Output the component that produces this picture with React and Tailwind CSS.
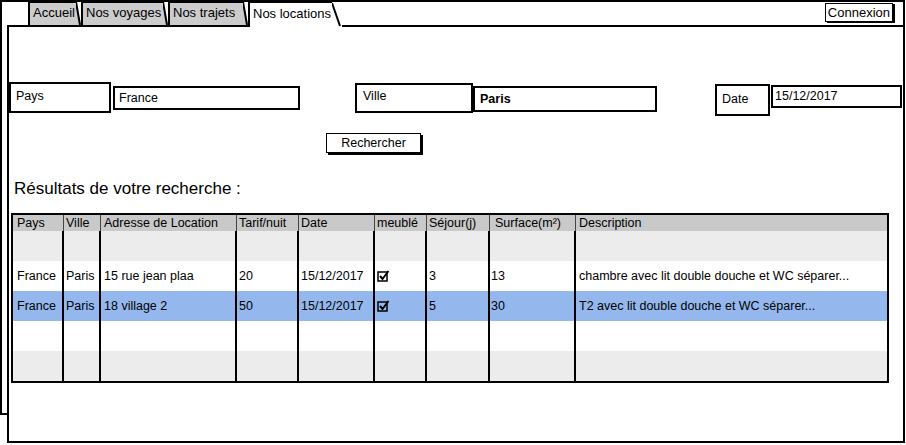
import React from 'react'

const cols = [
    { label: 'Pays', pl: 'pl-[4px]' },
    { label: 'Ville', pl: 'pl-[2px]' },
    { label: 'Adresse de Location', pl: 'pl-[3px]' },
    { label: 'Tarif/nuit', pl: 'pl-[2px]' },
    { label: 'Date', pl: 'pl-[2px]' },
    { label: 'meublé', pl: 'pl-[2px]' },
    { label: 'Séjour(j)', pl: 'pl-[2px]' },
    { label: 'Surface(m²)', pl: 'pl-[5px]' },
    { label: 'Description', pl: 'pl-[3px]' },
]

const rows = [
    { bg: 'bg-[#ececec]', cells: [] },
    { bg: 'bg-white', cells: ['France', 'Paris', '15 rue jean plaa', '20', '15/12/2017', 'check', '3', '13', 'chambre avec lit double douche et WC séparer...'] },
    { bg: 'bg-[#94b8ee]', cells: ['France', 'Paris', '18 village 2', '50', '15/12/2017', 'check', '5', '30', 'T2 avec lit double douche et WC séparer...'] },
    { bg: 'bg-white', cells: [] },
    { bg: 'bg-[#ececec]', cells: [] },
]

function Check() {
    return (
        <svg width="13" height="12" viewBox="0 0 13 12">
            <rect x="1" y="2" width="9" height="9" fill="none" stroke="#000" strokeWidth="1.5" />
            <path d="M3 6 L5.5 9 L11.5 1" fill="none" stroke="#000" strokeWidth="2" />
        </svg>
    )
}

function Tab({ label, active, slant = 4, w }) {
    if (active) {
        return (
            <div className="flex h-[25px]">
                <div className={`${w} bg-white border-l-2 border-t border-black pl-[3px] pt-[3px] text-[13px] leading-[16px] whitespace-nowrap`}>{label}</div>
                <svg width={slant + 2} height="25" className="block">
                    <polygon points={`0,0 1,0 ${slant + 1},25 0,25`} fill="#fff" />
                    <line x1="0" y1="1" x2={slant} y2="24" stroke="#000" strokeWidth="2" />
                </svg>
            </div>
        )
    }
    return (
        <div className="flex h-[25px] border-b-2 border-black">
            <div className={`${w} bg-[#cccccc] border-l-2 border-t border-black pl-[3px] pt-[2px] text-[13px] leading-[16px] whitespace-nowrap`}>{label}</div>
            <svg width={slant + 1} height="23" className="block">
                <polygon points={`0,0 1,0 ${slant + 1},23 0,23`} fill="#cccccc" />
                <line x1="0" y1="0" x2={slant} y2="23" stroke="#000" strokeWidth="2" />
            </svg>
        </div>
    )
}

export default function App() {
    const grid = 'grid grid-cols-[51px_37px_136px_62px_76px_52px_63px_86px_1fr]'
    return (
        <div className="w-[906px] h-[445px] bg-white text-black font-['Liberation_Sans',Arial,sans-serif] overflow-hidden">
            {/* fenetre */}
            <div className="w-[905px] h-[415px] border-2 border-black">
                {/* onglets */}
                <div className="flex ml-[5px] w-[898px] h-[25px]">
                    <div className="w-[21px] border-b-2 border-black" />
                    <Tab label="Accueil" w="w-[48px]" />
                    <Tab label="Nos voyages" w="w-[82px]" />
                    <Tab label="Nos trajets" w="w-[75px]" />
                    <Tab label="Nos locations" active slant={8} w="w-[84px]" />
                    <div className="flex-1 border-b-2 border-black flex justify-end items-start pt-[1px] pr-[12px]">
                        <div className="h-[19px] px-[2px] border border-black shadow-[2px_1px_0_#000] text-[13px] leading-[17px] bg-white">Connexion</div>
                    </div>
                </div>

                {/* panneau */}
                <div className="flex flex-col items-start ml-[5px] w-[898px] h-[416px] border-l-2 border-r-2 border-b-2 border-black bg-white">
                    <div className="flex items-start h-[34px] mt-[55px] text-[12.5px]">
                        <div className="w-[102px] h-[31px] border-2 border-black pl-[5px] pt-[5px] leading-[14px]">Pays</div>
                        <div className="ml-[2px] mt-[4px] w-[187px] h-[24px] border-2 border-black pl-[4px] flex items-center">France</div>
                        <div className="ml-[55px] mt-[1px] w-[118px] h-[30px] border-2 border-black pl-[6px] pt-[4px] leading-[14px]">Ville</div>
                        <div className="mt-[4px] w-[184px] h-[26px] border-2 border-black pl-[5px] flex items-center font-bold">Paris</div>
                        <div className="ml-[58px] mt-[2px] w-[55px] h-[32px] border-2 border-black pl-[5px] pt-[6px] leading-[14px]">Date</div>
                        <div className="ml-[1px] mt-[3px] w-[131px] h-[23px] border-2 border-black pl-[2px] flex items-center">15/12/2017</div>
                    </div>

                    <div className="ml-[317px] mt-[17px] w-[95px] h-[20px] border border-black shadow-[2px_2px_0_#000] flex items-center justify-center text-[12.5px]">Rechercher</div>

                    <div className="ml-[5px] mt-[26px] h-[20px] text-[17px] leading-[20px]">Résultats de votre recherche :</div>

                    <div className="ml-[2px] mt-[14px] w-[878px] border-2 border-black">
                        <div className={`${grid} h-[16px] bg-[#c9c9c9] text-[12.5px] leading-[16px]`}>
                            {cols.map((c, i) => (
                                <div key={c.label} className={`${c.pl} whitespace-nowrap ${i < cols.length - 1 ? 'border-r border-[#444]' : ''}`}>{c.label}</div>
                            ))}
                        </div>
                        {rows.map((r, ri) => (
                            <div key={ri} className={`${grid} h-[30px] ${r.bg} text-[12.5px]`}>
                                {cols.map((c, i) => {
                                    const v = r.cells[i]
                                    return (
                                        <div key={i} className={`flex items-center whitespace-nowrap ${i === 7 ? 'pl-[1px]' : c.pl} ${i < cols.length - 1 ? 'border-r-2 border-black' : ''}`}>
                                            {v === 'check' ? <Check /> : v}
                                        </div>
                                    )
                                })}
                            </div>
                        ))}
                    </div>
                </div>
            </div>
        </div>
    )
}
